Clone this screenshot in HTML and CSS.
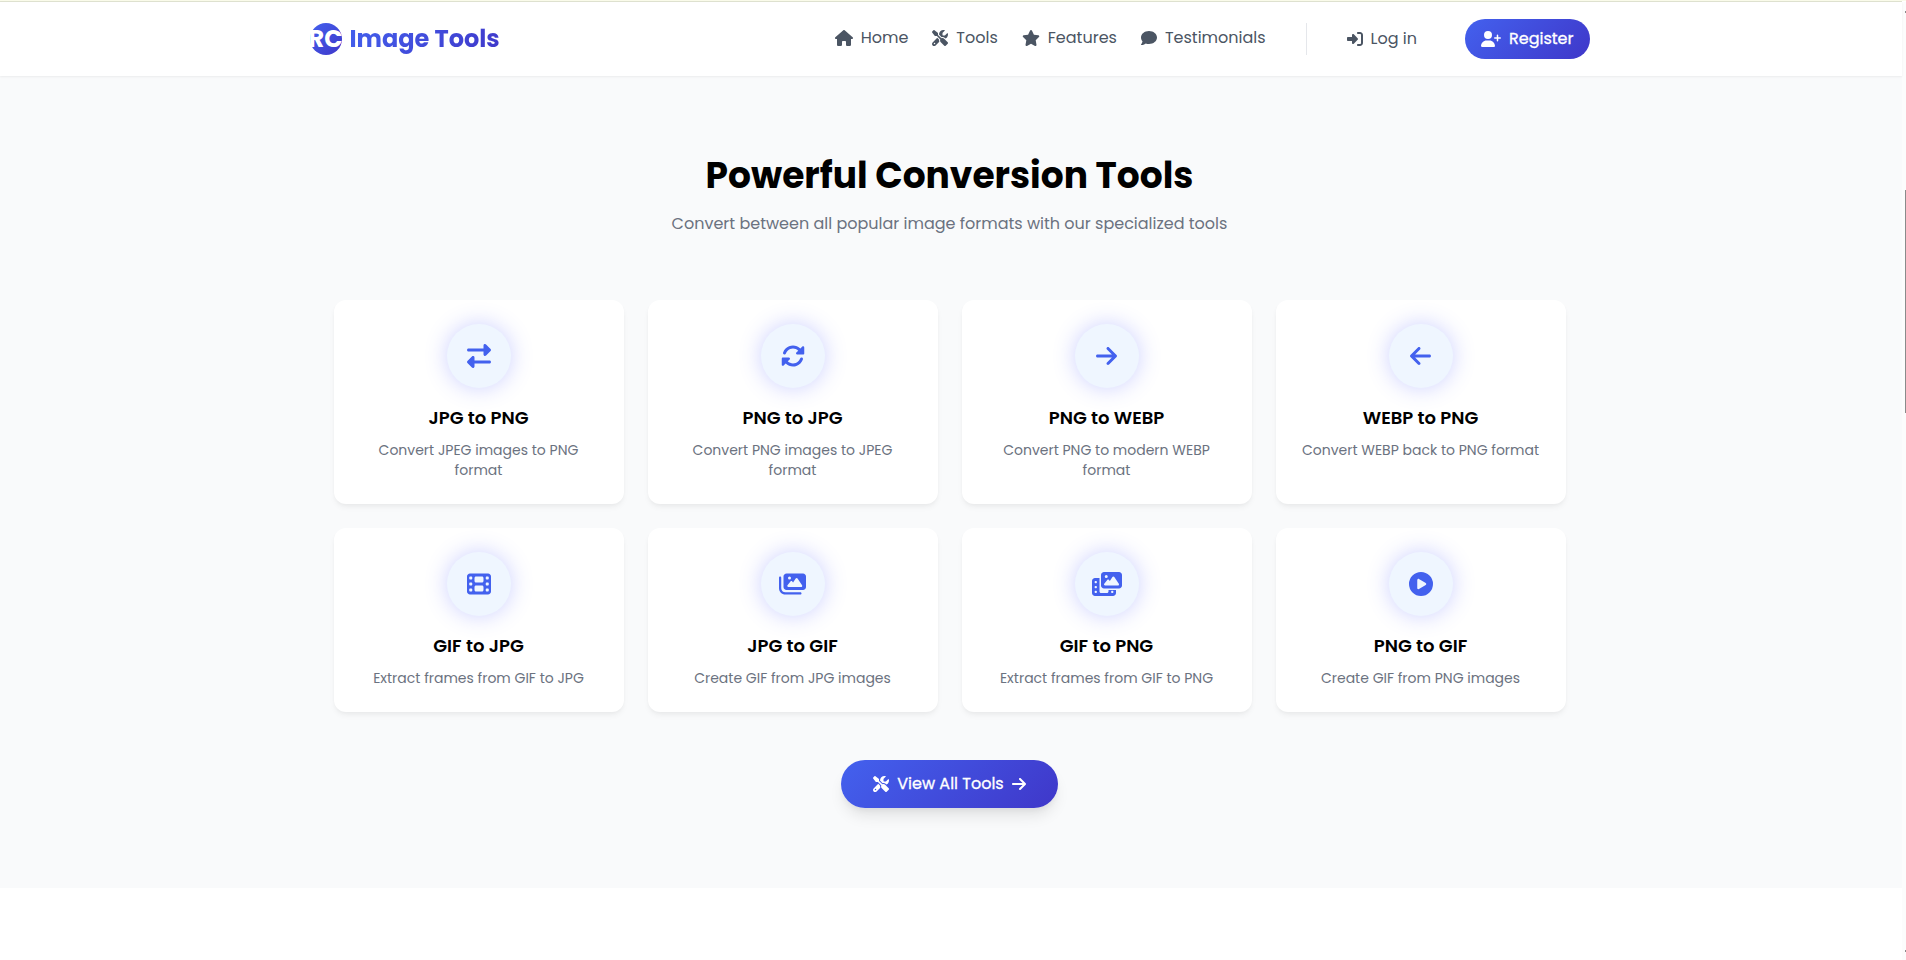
FILE: index.html
```html
<!DOCTYPE html>
<html lang="en">
<head>
<meta charset="utf-8">
<title>RC Image Tools</title>
<link rel="stylesheet" href="styles.css">
</head>
<body>
<svg class="sprite" aria-hidden="true">
  <symbol id="house" viewBox="0 0 576 512"><path d="M575.8 255.5c0 18-15 32.1-32 32.1l-32 0 .7 160.2c0 2.7-.2 5.4-.5 8.1l0 16.2c0 22.1-17.9 40-40 40l-16 0c-1.1 0-2.2 0-3.3-.1c-1.4 .1-2.8 .1-4.2 .1L416 512l-24 0c-22.1 0-40-17.9-40-40l0-24 0-64c0-17.7-14.3-32-32-32l-64 0c-17.7 0-32 14.3-32 32l0 64 0 24c0 22.1-17.9 40-40 40l-24 0-31.9 0c-1.5 0-3-.1-4.5-.2c-1.2 .1-2.4 .2-3.6 .2l-16 0c-22.1 0-40-17.9-40-40l0-112c0-.9 0-1.9 .1-2.8l0-69.7-32 0c-18 0-32-14-32-32.1c0-9 3-17 10-24L266.4 8c7-7 15-8 22-8s15 2 21 7L564.8 231.5c8 7 12 15 11 24z"/></symbol>
  <symbol id="tools" viewBox="0 0 512 512"><path d="M78.6 5C69.1-2.4 55.6-1.5 47 7L7 47c-8.5 8.5-9.4 22-2.1 31.6l80 104c4.5 5.9 11.6 9.4 19 9.4l54.1 0 109 109c-14.7 29-10 65.4 14.3 89.6l112 112c12.5 12.5 32.8 12.5 45.3 0l64-64c12.5-12.5 12.5-32.8 0-45.3l-112-112c-24.2-24.2-60.6-29-89.6-14.3l-109-109 0-54.1c0-7.5-3.5-14.5-9.4-19L78.6 5zM19.9 396.1C7.2 408.8 0 426.1 0 444.1C0 481.6 30.4 512 67.9 512c18 0 35.3-7.2 48-19.9L233.7 374.3c-7.8-20.9-9-43.6-3.6-65.1l-61.7-61.7L19.9 396.1zM512 144c0-10.5-1.1-20.7-3.2-30.5c-2.4-11.2-16.1-14.1-24.2-6l-63.9 63.9c-3 3-7.1 4.7-11.3 4.7L352 176c-8.8 0-16-7.2-16-16l0-57.4c0-4.2 1.7-8.3 4.7-11.3l63.9-63.9c8.1-8.1 5.2-21.8-6-24.2C388.7 1.1 378.5 0 368 0C288.5 0 224 64.5 224 144l0 .8 85.3 85.3c36-9.1 75.8 .5 104 28.7L429 274.5c49-23 83-72.8 83-130.5zM56 432a24 24 0 1 1 48 0 24 24 0 1 1 -48 0z"/></symbol>
  <symbol id="star" viewBox="0 0 576 512"><path d="M316.9 18C311.6 7 300.4 0 288.1 0s-23.4 7-28.8 18L195 150.3 51.4 171.5c-12 1.8-22 10.2-25.7 21.7s-.7 24.2 7.9 32.7L137.8 329 113.2 474.7c-2 12 3 24.2 12.9 31.3s23 8 33.8 2.3l128.3-68.5 128.3 68.5c10.8 5.7 23.9 4.9 33.8-2.3s14.9-19.3 12.9-31.3L438.5 329 542.7 225.9c8.6-8.5 11.7-21.2 7.9-32.7s-13.7-19.9-25.7-21.7L381.2 150.3 316.9 18z"/></symbol>
  <symbol id="comment" viewBox="0 0 512 512"><path d="M512 240c0 114.9-114.6 208-256 208c-37.1 0-72.3-6.4-104.1-17.9c-11.9 8.7-31.3 20.6-54.3 30.6C73.6 471.1 44.7 480 16 480c-6.5 0-12.3-3.9-14.8-9.9c-2.5-6-1.1-12.8 3.4-17.4c.3-.3 .7-.7 1.3-1.4c1.1-1.2 2.8-3.1 4.9-5.7c4.1-5 9.6-12.4 15.2-21.6c10-16.6 19.5-38.4 21.4-62.9C17.7 326.8 0 285.1 0 240C0 125.1 114.6 32 256 32s256 93.1 256 208z"/></symbol>
  <symbol id="login" viewBox="0 0 512 512"><path d="M217.9 105.9L340.7 228.7c7.2 7.2 11.3 17.1 11.3 27.3s-4.1 20.1-11.3 27.3L217.9 406.1c-6.4 6.4-15 9.9-24 9.9c-18.7 0-33.9-15.2-33.9-33.9l0-62.1L32 320c-17.7 0-32-14.3-32-32l0-64c0-17.7 14.3-32 32-32l128 0 0-62.1c0-18.7 15.2-33.9 33.9-33.9c9 0 17.6 3.6 24 9.9zM352 416l64 0c17.7 0 32-14.3 32-32l0-256c0-17.7-14.3-32-32-32l-64 0c-17.7 0-32-14.3-32-32s14.3-32 32-32l64 0c53 0 96 43 96 96l0 256c0 53-43 96-96 96l-64 0c-17.7 0-32-14.3-32-32s14.3-32 32-32z"/></symbol>
  <symbol id="user-plus" viewBox="0 0 640 512"><path d="M96 128a128 128 0 1 1 256 0A128 128 0 1 1 96 128zM0 482.3C0 383.8 79.8 304 178.3 304l91.4 0C368.2 304 448 383.8 448 482.3c0 16.4-13.3 29.7-29.7 29.7L29.7 512C13.3 512 0 498.7 0 482.3zM504 312l0-64-64 0c-13.3 0-24-10.7-24-24s10.7-24 24-24l64 0 0-64c0-13.3 10.7-24 24-24s24 10.7 24 24l0 64 64 0c13.3 0 24 10.7 24 24s-10.7 24-24 24l-64 0 0 64c0 13.3-10.7 24-24 24s-24-10.7-24-24z"/></symbol>
  <symbol id="arrow-right" viewBox="0 0 448 512"><path d="M438.6 278.6c12.5-12.5 12.5-32.8 0-45.3l-160-160c-12.5-12.5-32.8-12.5-45.3 0s-12.5 32.8 0 45.3L338.8 224 32 224c-17.7 0-32 14.3-32 32s14.3 32 32 32l306.7 0L233.4 393.4c-12.5 12.5-12.5 32.8 0 45.3s32.8 12.5 45.3 0l160-160z"/></symbol>
  <symbol id="arrow-left" viewBox="0 0 448 512"><path d="M9.4 233.4c-12.5 12.5-12.5 32.8 0 45.3l160 160c12.5 12.5 32.8 12.5 45.3 0s12.5-32.8 0-45.3L109.2 288 416 288c17.7 0 32-14.3 32-32s-14.3-32-32-32l-306.7 0L214.6 118.6c12.5-12.5 12.5-32.8 0-45.3s-32.8-12.5-45.3 0l-160 160z"/></symbol>
  <symbol id="exchange" viewBox="0 0 512 512"><path d="M32 96l320 0 0-64c0-12.9 7.8-24.6 19.8-29.6s25.7-2.2 34.9 6.9l96 96c6 6 9.4 14.1 9.4 22.6s-3.4 16.6-9.4 22.6l-96 96c-9.2 9.2-22.9 11.9-34.9 6.9s-19.8-16.6-19.8-29.6l0-64L32 160c-17.7 0-32-14.3-32-32s14.3-32 32-32zM480 352c17.7 0 32 14.3 32 32s-14.3 32-32 32l-320 0 0 64c0 12.9-7.8 24.6-19.8 29.6s-25.7 2.2-34.9-6.9l-96-96c-6-6-9.4-14.1-9.4-22.6s3.4-16.6 9.4-22.6l96-96c9.2-9.2 22.9-11.9 34.9-6.9s19.8 16.6 19.8 29.6l0 64 320 0z"/></symbol>
  <symbol id="rotate" viewBox="0 0 512 512"><path d="M142.9 142.9c-17.5 17.5-30.1 38-37.8 59.8c-5.9 16.7-24.2 25.4-40.8 19.5s-25.4-24.2-19.5-40.8C55.6 150.7 73.2 122 97.6 97.6c87.2-87.2 228.3-87.5 315.8-1L455 55c6.9-6.9 17.2-8.9 26.2-5.2s14.8 12.5 14.8 22.2l0 128c0 13.3-10.7 24-24 24l-8.4 0L344 224c-9.7 0-18.5-5.8-22.2-14.8s-1.7-19.3 5.2-26.2l41.1-41.1c-62.6-61.5-163.1-61.2-225.3 1zM16 312c0-13.3 10.7-24 24-24l7.6 0 .7 0L168 288c9.7 0 18.5 5.8 22.2 14.8s1.7 19.3-5.2 26.2l-41.1 41.1c62.6 61.5 163.1 61.2 225.3-1c17.5-17.5 30.1-38 37.8-59.8c5.9-16.7 24.2-25.4 40.8-19.5s25.4 24.2 19.5 40.8c-10.8 30.6-28.4 59.3-52.9 83.8c-87.2 87.2-228.3 87.5-315.8 1L57 457c-6.9 6.9-17.2 8.9-26.2 5.2S16 449.7 16 440l0-119.6 0-.7 0-7.6z"/></symbol>
  <symbol id="film" viewBox="0 0 512 512"><path fill-rule="evenodd" d="M0 96C0 60.7 28.7 32 64 32l384 0c35.3 0 64 28.7 64 64l0 320c0 35.3-28.7 64-64 64L64 480c-35.3 0-64-28.7-64-64L0 96zM48 368l0 32c0 8.8 7.2 16 16 16l32 0c8.8 0 16-7.2 16-16l0-32c0-8.8-7.2-16-16-16l-32 0c-8.8 0-16 7.2-16 16zM400 368l0 32c0 8.8 7.2 16 16 16l32 0c8.8 0 16-7.2 16-16l0-32c0-8.8-7.2-16-16-16l-32 0c-8.8 0-16 7.2-16 16zM48 240l0 32c0 8.8 7.2 16 16 16l32 0c8.8 0 16-7.2 16-16l0-32c0-8.8-7.2-16-16-16l-32 0c-8.8 0-16 7.2-16 16zM400 240l0 32c0 8.8 7.2 16 16 16l32 0c8.8 0 16-7.2 16-16l0-32c0-8.8-7.2-16-16-16l-32 0c-8.8 0-16 7.2-16 16zM48 112l0 32c0 8.8 7.2 16 16 16l32 0c8.8 0 16-7.2 16-16l0-32c0-8.8-7.2-16-16-16l-32 0c-8.8 0-16 7.2-16 16zM400 112l0 32c0 8.8 7.2 16 16 16l32 0c8.8 0 16-7.2 16-16l0-32c0-8.8-7.2-16-16-16l-32 0c-8.8 0-16 7.2-16 16zM160 128l0 64c0 17.7 14.3 32 32 32l128 0c17.7 0 32-14.3 32-32l0-64c0-17.7-14.3-32-32-32L192 96c-17.7 0-32 14.3-32 32zM192 288c-17.7 0-32 14.3-32 32l0 64c0 17.7 14.3 32 32 32l128 0c17.7 0 32-14.3 32-32l0-64c0-17.7-14.3-32-32-32l-128 0z"/></symbol>
  <symbol id="images" viewBox="0 0 576 512"><path fill-rule="evenodd" d="M160 32c-35.3 0-64 28.7-64 64l0 224c0 35.3 28.7 64 64 64l352 0c35.3 0 64-28.7 64-64l0-224c0-35.3-28.7-64-64-64L160 32zM396 138.7l96 144c4.9 7.4 5.4 16.8 1.2 24.6S480.9 320 472 320l-144 0-48 0-80 0c-9.2 0-17.6-5.3-21.6-13.6s-2.9-18.2 2.9-25.4l64-80c4.6-5.7 11.4-9 18.7-9s14.2 3.3 18.7 9l17.3 21.6 56-84C360.5 132 368 128 376 128s15.5 4 20 10.7zM192 128a32 32 0 1 1 64 0 32 32 0 1 1 -64 0zM48 120c0-13.3-10.7-24-24-24S0 106.7 0 120L0 344c0 75.1 60.9 136 136 136l320 0c13.3 0 24-10.7 24-24s-10.7-24-24-24l-320 0c-48.6 0-88-39.4-88-88l0-224z"/></symbol>
  <symbol id="photo-film" viewBox="0 0 640 512"><path fill-rule="evenodd" d="M256 0L576 0c35.3 0 64 28.7 64 64l0 224c0 35.3-28.7 64-64 64l-320 0c-35.3 0-64-28.7-64-64l0-224c0-35.3 28.7-64 64-64zM476 106.7C471.5 100 464 96 456 96s-15.5 4-20 10.7l-56 84L362.7 169c-4.6-5.7-11.5-9-18.7-9s-14.2 3.3-18.7 9l-64 80c-5.8 7.2-6.9 17.1-2.9 25.4s12.4 13.6 21.6 13.6l80 0 48 0 144 0c8.9 0 17-4.9 21.2-12.7s3.7-17.3-1.2-24.6l-96-144zM336 96a32 32 0 1 0 -64 0 32 32 0 1 0 64 0zM64 128l96 0 0 256 0 32c0 17.7 14.3 32 32 32l128 0c17.7 0 32-14.3 32-32l0-32 160 0 0 64c0 35.3-28.7 64-64 64L64 512c-35.3 0-64-28.7-64-64L0 192c0-35.3 28.7-64 64-64zM72 192c-8.8 0-16 7.2-16 16l0 16c0 8.8 7.2 16 16 16l16 0c8.8 0 16-7.2 16-16l0-16c0-8.8-7.2-16-16-16l-16 0zM72 296c-8.8 0-16 7.2-16 16l0 16c0 8.8 7.2 16 16 16l16 0c8.8 0 16-7.2 16-16l0-16c0-8.8-7.2-16-16-16l-16 0zM72 400c-8.8 0-16 7.2-16 16l0 16c0 8.8 7.2 16 16 16l16 0c8.8 0 16-7.2 16-16l0-16c0-8.8-7.2-16-16-16l-16 0zM424 400c-8.8 0-16 7.2-16 16l0 16c0 8.8 7.2 16 16 16l16 0c8.8 0 16-7.2 16-16l0-16c0-8.8-7.2-16-16-16l-16 0z"/></symbol>
  <symbol id="play" viewBox="0 0 512 512"><path fill-rule="evenodd" d="M0 256a256 256 0 1 1 512 0A256 256 0 1 1 0 256zM188.3 147.1c-7.6 4.2-12.3 12.3-12.3 20.9l0 176c0 8.7 4.7 16.7 12.3 20.9s16.8 4.1 24.3-.5l144-88c7.1-4.4 11.5-12.1 11.5-20.5s-4.4-16.1-11.5-20.5l-144-88c-7.4-4.5-16.7-4.7-24.3-.5z"/></symbol>
</svg>

<div class="page">
  <header class="header">
    <div class="header-inner">
      <a class="logo">
        <span class="logo-badge">RC</span>
        <span class="logo-text">Image Tools</span>
      </a>
      <nav class="nav">
        <a class="nav-link"><svg class="icon w18"><use href="#house"/></svg><span>Home</span></a>
        <a class="nav-link"><svg class="icon"><use href="#tools"/></svg><span>Tools</span></a>
        <a class="nav-link"><svg class="icon w18"><use href="#star"/></svg><span>Features</span></a>
        <a class="nav-link"><svg class="icon"><use href="#comment"/></svg><span>Testimonials</span></a>
      </nav>
      <div class="account">
        <a class="login"><svg class="icon"><use href="#login"/></svg><span>Log in</span></a>
        <a class="register"><svg class="icon w20"><use href="#user-plus"/></svg><span>Register</span></a>
      </div>
    </div>
  </header>

  <main class="tools">
    <h2 class="heading">Powerful Conversion Tools</h2>
    <p class="subheading">Convert between all popular image formats with our specialized tools</p>
    <div class="grid">
      <article class="card"><div class="disc"><svg class="glyph"><use href="#exchange"/></svg></div><h3 class="title">JPG to PNG</h3><p class="desc">Convert JPEG images to PNG format</p></article>
      <article class="card"><div class="disc"><svg class="glyph"><use href="#rotate"/></svg></div><h3 class="title">PNG to JPG</h3><p class="desc">Convert PNG images to JPEG format</p></article>
      <article class="card"><div class="disc"><svg class="glyph narrow"><use href="#arrow-right"/></svg></div><h3 class="title">PNG to WEBP</h3><p class="desc">Convert PNG to modern WEBP format</p></article>
      <article class="card"><div class="disc"><svg class="glyph narrow"><use href="#arrow-left"/></svg></div><h3 class="title">WEBP to PNG</h3><p class="desc">Convert WEBP back to PNG format</p></article>
      <article class="card"><div class="disc"><svg class="glyph"><use href="#film"/></svg></div><h3 class="title">GIF to JPG</h3><p class="desc">Extract frames from GIF to JPG</p></article>
      <article class="card"><div class="disc"><svg class="glyph wide"><use href="#images"/></svg></div><h3 class="title">JPG to GIF</h3><p class="desc">Create GIF from JPG images</p></article>
      <article class="card"><div class="disc"><svg class="glyph wider"><use href="#photo-film"/></svg></div><h3 class="title">GIF to PNG</h3><p class="desc">Extract frames from GIF to PNG</p></article>
      <article class="card"><div class="disc"><svg class="glyph"><use href="#play"/></svg></div><h3 class="title">PNG to GIF</h3><p class="desc">Create GIF from PNG images</p></article>
    </div>
    <a class="view-all"><svg class="icon"><use href="#tools"/></svg><span>View All Tools</span><svg class="icon w14"><use href="#arrow-right"/></svg></a>
  </main>
</div>
<div class="scrollbar"><i class="tick"></i><i class="thumb"></i><i class="tick"></i></div>
</body>
</html>
```
FILE: styles.css
```css
* { box-sizing: border-box; margin: 0; padding: 0; }

body {
  display: flex;
  height: 960px;
  overflow: hidden;
  background: #fff;
  border-top: 1px solid #fafbea;
  font-family: Poppins, Inter, "Open Sans", sans-serif;
  font-size: 16px;
  line-height: 24px;
  color: #000;
}

.sprite { position: absolute; width: 0; height: 0; }

.page { width: 1902px; border-top: 1px solid #dfe2d0; }

/* Header */
.header {
  position: relative;
  height: 74px;
  padding-right: 3px;
  background: #fff;
  box-shadow: 0 1px 2px rgba(0, 0, 0, .06);
}
.header-inner {
  display: flex;
  align-items: center;
  width: 1280px;
  height: 74px;
  margin: 0 auto;
}
.logo { display: flex; align-items: center; gap: 8px; margin-right: auto; }
.logo-badge {
  display: flex;
  align-items: center;
  justify-content: center;
  width: 32px;
  height: 32px;
  border-radius: 50%;
  background: linear-gradient(135deg, #4361ee, #3f37c9);
  color: #fff;
  font-size: 24px;
  font-weight: 700;
}
.logo-text {
  font-size: 24px;
  line-height: 32px;
  font-weight: 700;
  white-space: nowrap;
  background: linear-gradient(135deg, #4361ee, #3f37c9);
  background-clip: text;
  -webkit-background-clip: text;
  color: transparent;
}
.nav { display: flex; gap: 24px; padding-bottom: 2px; }
.nav-link, .login, .register, .view-all {
  display: flex;
  align-items: center;
  gap: 8px;
  white-space: nowrap;
  color: #4b5563;
}
.icon { display: block; flex: none; width: 16px; height: 16px; fill: currentColor; }
.icon.w14 { width: 14px; }
.icon.w18 { width: 18px; }
.icon.w20 { width: 20px; }

.account {
  display: flex;
  align-items: center;
  height: 32px;
  margin-left: 40px;
  padding-left: 40px;
  border-left: 1px solid #e5e7eb;
}
.register {
  height: 40px;
  margin-left: 48px;
  padding: 0 16px;
  border-radius: 20px;
  background: linear-gradient(135deg, #4361ee, #3f37c9);
  color: #fff;
  -webkit-text-stroke: .3px #fff;
}

/* Tools section */
.tools {
  display: flex;
  flex-direction: column;
  align-items: center;
  height: 812px;
  padding: 80px 3px 0 0;
  background: #f9fafb;
}
.heading { font-size: 36px; line-height: 40px; font-weight: 700; }
.subheading { margin-top: 16px; color: #6b7280; }
.grid {
  display: grid;
  grid-template-columns: repeat(4, 290px);
  grid-template-rows: 204px 184px;
  gap: 24px;
  margin-top: 64px;
}
.card {
  display: flex;
  flex-direction: column;
  align-items: center;
  padding: 24px;
  border-radius: 12px;
  background: #fff;
  box-shadow: 0 4px 6px -1px rgba(0, 0, 0, .05), 0 2px 4px -1px rgba(0, 0, 0, .03);
  text-align: center;
}
.disc {
  display: flex;
  align-items: center;
  justify-content: center;
  width: 64px;
  height: 64px;
  border-radius: 50%;
  background: #eff6ff;
  box-shadow: 0 0 22px rgba(67, 80, 255, .27);
  color: #4361ee;
}
.glyph { display: block; width: 24px; height: 24px; fill: currentColor; }
.glyph.narrow { width: 21px; }
.glyph.wide { width: 27px; }
.glyph.wider { width: 30px; }
.title { margin-top: 16px; font-size: 18px; line-height: 28px; font-weight: 600; }
.desc { margin-top: 8px; font-size: 14px; line-height: 20px; color: #6b7280; }

.view-all {
  height: 48px;
  margin-top: 48px;
  padding: 0 32px;
  border-radius: 24px;
  background: linear-gradient(135deg, #4361ee, #3f37c9);
  box-shadow: 0 10px 15px -3px rgba(0, 0, 0, .1), 0 4px 6px -2px rgba(0, 0, 0, .05);
  color: #fff;
  -webkit-text-stroke: .3px #fff;
}

/* Scrollbar at the window edge */
.scrollbar {
  display: flex;
  flex-direction: column;
  justify-content: space-between;
  width: 4px;
  margin-top: 1px;
  padding: 9px 0 8px 3px;
  background: #fcfcfc;
}
.tick { width: 1px; height: 2px; background: #8b8b8b; }
.thumb { height: 223px; margin-bottom: 361px; background: #8b8b8b; }
```
